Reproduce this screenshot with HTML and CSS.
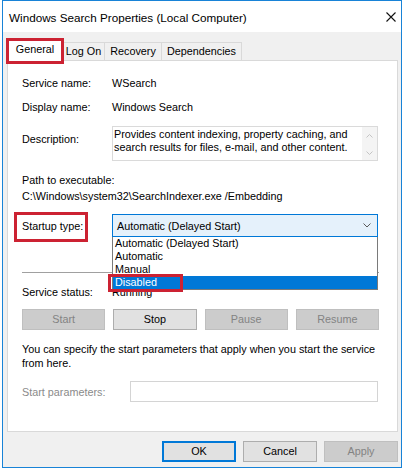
FILE: index.html
```html
<!DOCTYPE html>
<html lang="en">

<head>
    <meta charset="UTF-8">
    <title>Windows Search Properties (Local Computer)</title>
    <link rel="stylesheet" href="styles.css">
</head>

<body>
    <div class="window">
        <div class="titlebar">
            <span class="title">Windows Search Properties (Local Computer)</span>
            <svg class="close" width="10" height="10" viewBox="0 0 10 10">
                <path d="M0.5 0.5L9.5 9.5M9.5 0.5L0.5 9.5" stroke="#111" stroke-width="1.1" fill="none" />
            </svg>
        </div>

        <div class="body">
            <div class="tabs">
                <div class="tab tab-general active marked">General</div>
                <div class="tab tab-logon">Log On</div>
                <div class="tab tab-recovery">Recovery</div>
                <div class="tab tab-deps">Dependencies</div>
            </div>

            <div class="panel">
                <div class="field first">
                    <span class="label">Service name:</span>
                    <span>WSearch</span>
                </div>
                <div class="field gap8">
                    <span class="label">Display name:</span>
                    <span>Windows Search</span>
                </div>
                <div class="field desc-row">
                    <span class="label">Description:</span>
                    <div class="textbox">
                        <div class="textbox-text">Provides content indexing, property caching, and<br>search results for files, e-mail, and other content.</div>
                        <div class="scrollbar">
                            <svg width="7" height="4" viewBox="0 0 7 4"><path d="M0.5 3.5L3.5 0.5L6.5 3.5" stroke="#c4c4c4" fill="none" /></svg>
                            <svg width="7" height="4" viewBox="0 0 7 4"><path d="M0.5 0.5L3.5 3.5L6.5 0.5" stroke="#c4c4c4" fill="none" /></svg>
                        </div>
                    </div>
                </div>
                <div class="line path-label">Path to executable:</div>
                <div class="line">C:\Windows\system32\SearchIndexer.exe /Embedding</div>

                <div class="field startup-row">
                    <span class="label startup-label">Startup type:</span>
                    <div class="select-wrap">
                        <div class="select">
                            <span>Automatic (Delayed Start)</span>
                            <svg width="8" height="5" viewBox="0 0 8 5"><path d="M0.5 0.5L4 4L7.5 0.5" stroke="#5a5a5a" fill="none" /></svg>
                        </div>
                        <div class="dropdown">
                            <div class="option">Automatic (Delayed Start)</div>
                            <div class="option">Automatic</div>
                            <div class="option">Manual</div>
                            <div class="option selected">Disabled</div>
                        </div>
                    </div>
                </div>

                <div class="separator"></div>

                <div class="field status-row">
                    <span class="label">Service status:</span>
                    <span>Running</span>
                </div>

                <div class="service-buttons">
                    <div class="btn disabled">Start</div>
                    <div class="btn">Stop</div>
                    <div class="btn disabled">Pause</div>
                    <div class="btn disabled">Resume</div>
                </div>

                <p class="hint">You can specify the start parameters that apply when you start the service<br>from here.</p>

                <div class="field params-row">
                    <span class="label params-label">Start parameters:</span>
                    <div class="input"></div>
                </div>
            </div>

            <div class="actions">
                <div class="btn dialog-btn default">OK</div>
                <div class="btn dialog-btn">Cancel</div>
                <div class="btn dialog-btn disabled">Apply</div>
            </div>
        </div>
    </div>
</body>

</html>
```

FILE: styles.css
```css
body {
    margin: 0;
    background: #ffffff;
    font-family: "Liberation Sans", Arial, sans-serif;
    font-size: 10.8px;
    color: #000;
}

/* Dialog frame */
.window {
    box-sizing: border-box;
    width: 400px;
    height: 468px;
    margin-left: 2px;
    border: 1px solid #1883d7;
    display: flex;
    flex-direction: column;
}

.titlebar {
    height: 31px;
    flex-shrink: 0;
    background: #fff;
    display: flex;
    align-items: center;
    justify-content: space-between;
    padding: 0 5px 0 6px;
}

.title {
    font-size: 11.7px;
    padding-top: 1px;
}

.close {
    display: block;
    margin-top: 1px;
}

.body {
    flex: 1;
    background: #f0f0f0;
    padding: 0 3px 0 4px;
}

/* Tabs */
.tabs {
    display: flex;
    align-items: flex-end;
    height: 28px;
}

.tab {
    box-sizing: border-box;
    height: 18px;
    line-height: 17px;
    text-align: center;
    border: 1px solid #d9d9d9;
    border-bottom: none;
    border-left: none;
    background: #f0f0f0;
}

.tab.active {
    height: 21px;
    line-height: 19px;
    background: #fff;
    border-left: 1px solid #d9d9d9;
    position: relative;
    z-index: 1;
    margin-bottom: -1px;
    height: 22px;
}

.tab-general { width: 56px; }
.tab-logon { width: 42px; }
.tab-recovery { width: 57px; }
.tab-deps { width: 80px; }

/* Red highlight boxes */
.marked,
.startup-label,
.option.selected {
    position: relative;
}

.marked::after,
.startup-label::after,
.option.selected::after {
    content: "";
    position: absolute;
    box-sizing: border-box;
    border: 3px solid #cc2232;
}

.marked::after {
    left: -2px;
    top: -2px;
    width: 58px;
    height: 26px;
}

.startup-label::after {
    left: -8px;
    top: -6px;
    width: 74px;
    height: 30px;
}

.option.selected::after {
    left: -5px;
    top: -2px;
    width: 75px;
    height: 18px;
}

/* Panel */
.panel {
    box-sizing: border-box;
    height: 372px;
    background: #fff;
    border: 1px solid #d9d9d9;
    padding: 14px 18px 0 14px;
}

.field {
    display: flex;
    align-items: center;
    line-height: 16px;
}

.label {
    width: 90px;
    flex-shrink: 0;
}

.first { margin-top: 0; }
.gap8 { margin-top: 8px; }

.desc-row {
    margin-top: 11px;
    align-items: flex-start;
}

.desc-row .label {
    padding-top: 5px;
}

.textbox {
    box-sizing: border-box;
    width: 266px;
    height: 35px;
    border: 1px solid #dadada;
    display: flex;
}

.textbox-text {
    flex: 1;
    line-height: 13px;
    padding: 1px 0 0 1px;
    white-space: nowrap;
}

.scrollbar {
    width: 15px;
    background: #f4f4f4;
    display: flex;
    flex-direction: column;
    align-items: center;
    justify-content: space-between;
    padding: 7px 0 5px;
}

.scrollbar svg {
    display: block;
}

.line {
    line-height: 16px;
}

.path-label {
    margin-top: 11px;
}

.startup-row {
    margin-top: 10px;
}

.select-wrap {
    position: relative;
    width: 266px;
}

.select {
    box-sizing: border-box;
    height: 23px;
    background: #e5f1fb;
    border: 1px solid #0078d7;
    display: flex;
    align-items: center;
    justify-content: space-between;
    padding: 0 6px 0 4px;
}

.select svg {
    display: block;
}

.dropdown {
    position: absolute;
    top: 23px;
    left: 0;
    right: 0;
    z-index: 2;
    background: #fff;
    border: 1px solid #7a7a7a;
    border-top: none;
}

.option {
    height: 13px;
    line-height: 13px;
    padding-left: 2px;
}

.option.selected {
    background: #0078d7;
    color: #fff;
}

.separator {
    margin-top: 35px;
    height: 1px;
    background: #a0a0a0;
}

.status-row {
    margin-top: 11px;
}

/* Buttons */
.service-buttons {
    margin-top: 9px;
    display: flex;
    gap: 8px;
}

.btn {
    box-sizing: border-box;
    height: 21px;
    line-height: 19px;
    text-align: center;
    background: #e1e1e1;
    border: 1px solid #adadad;
}

.service-buttons .btn {
    flex: 1;
}

.btn.disabled {
    background: #cccccc;
    border-color: #bfbfbf;
    color: #838383;
}

.hint {
    margin: 12px 0 0;
    line-height: 14px;
    white-space: nowrap;
}

.params-row {
    margin-top: 11px;
}

.params-label {
    width: 108px;
    color: #8a8a8a;
}

.input {
    box-sizing: border-box;
    width: 248px;
    height: 21px;
    border: 1px solid #d4d4d4;
    background: #fff;
}

/* Dialog buttons */
.actions {
    margin-top: 9px;
    display: flex;
    justify-content: flex-end;
    gap: 7px;
}

.dialog-btn {
    width: 74px;
}

.dialog-btn.default {
    border: 2px solid #0078d7;
    line-height: 17px;
}
```
